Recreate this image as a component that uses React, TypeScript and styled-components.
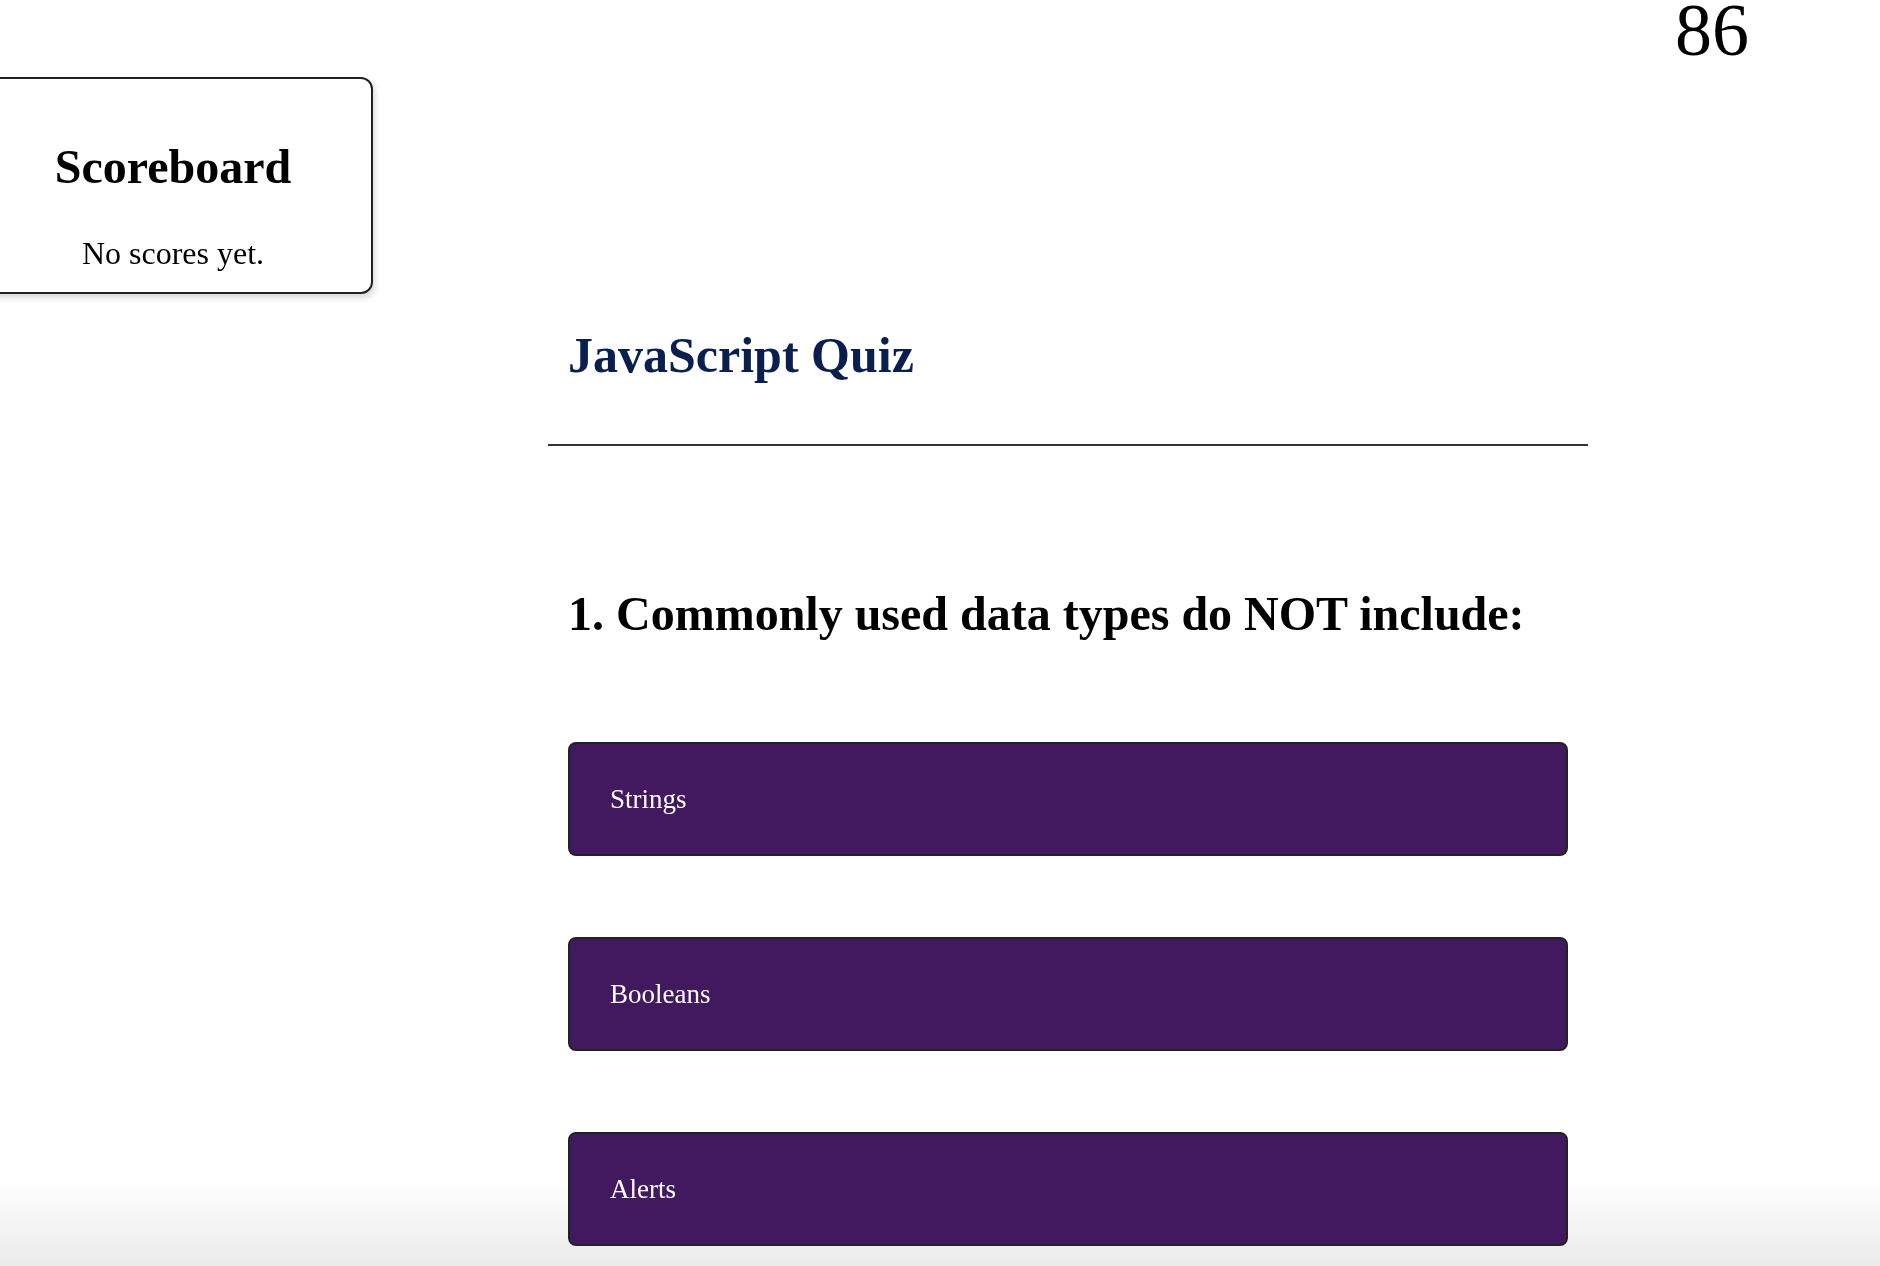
import React from "react";
import styled, { createGlobalStyle } from "styled-components";

const colors = {
    black: "#000000",
    white: "#ffffff",
    border: "#222222",
    navy: "#0a1f4d",
    purple: "#42195e",
    rule: "#333333",
};

const GlobalStyle = createGlobalStyle`
    html {
        background-color: ${colors.white};
    }

    body {
        margin: 0;
        padding: 0;
        font-family: "Liberation Serif", "Times New Roman", serif;
        color: ${colors.black};
    }
`;

// soft grey fade along the bottom edge of the window, behind the content
const BottomFade = styled.div`
    position: fixed;
    left: 0;
    right: 0;
    bottom: 0;
    height: 84px;
    background: linear-gradient(to bottom, rgba(234, 234, 234, 0), #eaeaea);
    z-index: -1;
    pointer-events: none;
`;

const TopBar = styled.header`
    display: flex;
    justify-content: space-between;
    align-items: flex-start;
`;

const Scoreboard = styled.aside`
    box-sizing: border-box;
    width: 400px;
    height: 217px;
    margin-top: 77px;
    margin-left: -27px;
    border: 2px solid ${colors.border};
    border-radius: 12px;
    background-color: ${colors.white};
    box-shadow: 2px 4px 6px rgba(0, 0, 0, 0.15);
    text-align: center;
    padding-top: 60px;
`;

const ScoreTitle = styled.h2`
    margin: 0;
    font-size: 48px;
    line-height: 55px;
    font-weight: 700;
`;

const ScoreCaption = styled.p`
    margin: 41px 0 0;
    font-size: 32px;
    line-height: 37px;
`;

const Timer = styled.div`
    font-size: 74px;
    line-height: 60px;
    margin-right: 131px;
`;

const Quiz = styled.main`
    width: 1040px;
    margin-left: 548px;
`;

const QuizHeader = styled.div`
    border-bottom: 2px solid ${colors.rule};
    padding: 32px 20px 60px;
`;

const QuizTitle = styled.h1`
    margin: 0;
    font-size: 50px;
    line-height: 58px;
    font-weight: 700;
    color: ${colors.navy};
`;

const QuestionBlock = styled.section`
    padding: 0 20px;
`;

const Question = styled.h2`
    margin: 140px 0 0;
    font-size: 48px;
    line-height: 55px;
    font-weight: 700;
`;

const Choices = styled.div`
    display: flex;
    flex-direction: column;
    gap: 81px;
    margin-top: 101px;
`;

const Choice = styled.button`
    all: unset;
    box-sizing: border-box;
    cursor: pointer;
    width: 1000px;
    height: 114px;
    padding: 0 40px;
    display: flex;
    align-items: center;
    background-color: ${colors.purple};
    border: 2px solid ${colors.border};
    border-radius: 8px;
    color: ${colors.white};
    font-family: "Liberation Serif", "Times New Roman", serif;
    font-size: 27px;
`;

const choices = ["Strings", "Booleans", "Alerts"];

function App() {
    return (
        <>
            <GlobalStyle />
            <BottomFade />
            <TopBar>
                <Scoreboard>
                    <ScoreTitle>Scoreboard</ScoreTitle>
                    <ScoreCaption>No scores yet.</ScoreCaption>
                </Scoreboard>
                <Timer>86</Timer>
            </TopBar>
            <Quiz>
                <QuizHeader>
                    <QuizTitle>JavaScript Quiz</QuizTitle>
                </QuizHeader>
                <QuestionBlock>
                    <Question>1. Commonly used data types do NOT include:</Question>
                    <Choices>
                        {choices.map((choice) => (
                            <Choice key={choice}>{choice}</Choice>
                        ))}
                    </Choices>
                </QuestionBlock>
            </Quiz>
        </>
    );
}

export default App;
